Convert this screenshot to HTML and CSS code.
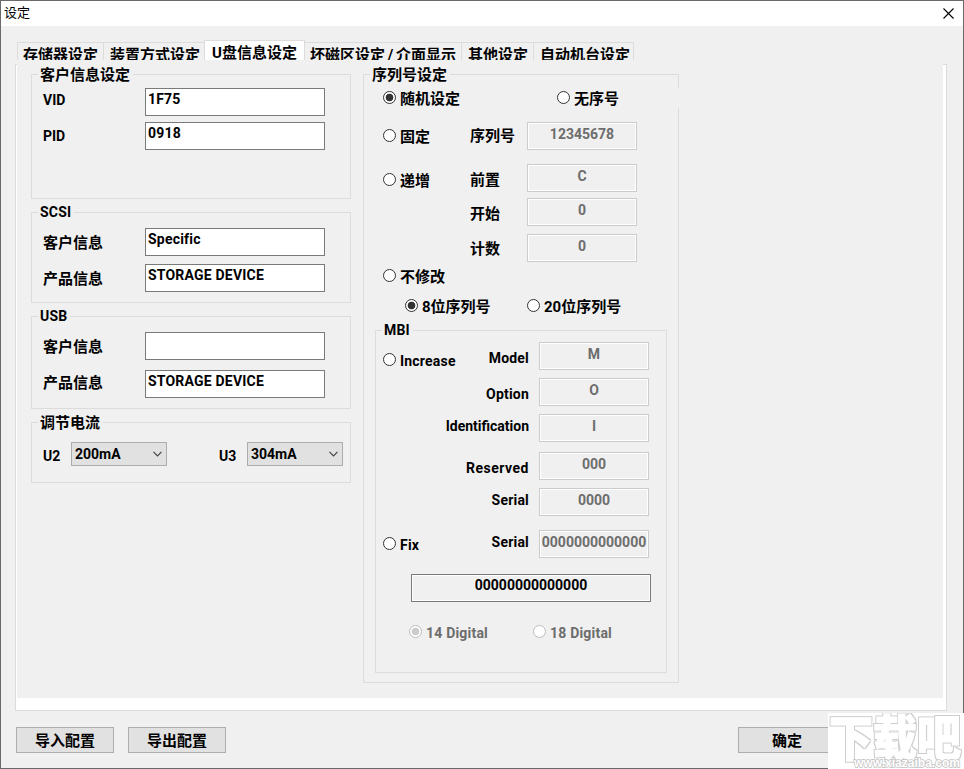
FILE: index.html
```html
<!DOCTYPE html>
<html lang="zh-CN">
<head>
    <meta charset="UTF-8">
    <meta name="viewport" content="width=device-width, initial-scale=1.0">
    <title>设定</title>
    <link rel="stylesheet" href="styles.css">
</head>
<body>
    <div class="window">
        <div class="titlebar">
            <span class="title">设定</span>
            <svg class="close" width="11" height="11" viewBox="0 0 11 11">
                <path d="M0.5 0.5L10.5 10.5M10.5 0.5L0.5 10.5" stroke="#000" stroke-width="1.1" fill="none"/>
            </svg>
        </div>

        <div class="tabs">
            <div class="tab tab-first">存储器设定</div>
            <div class="tab tab-mode">装置方式设定</div>
            <div class="tab tab-usb active">U盘信息设定</div>
            <div class="tab tab-bad">坏磁区设定 / 介面显示</div>
            <div class="tab tab-other">其他设定</div>
            <div class="tab tab-auto">自动机台设定</div>
        </div>

        <div class="panel">
            <div class="page">
                <div class="col-left">
                    <fieldset class="group group-id">
                        <legend>客户信息设定</legend>
                        <div class="row"><label class="raised">VID</label><input class="field" type="text" value="1F75"></div>
                        <div class="row"><label>PID</label><input class="field" type="text" value="0918"></div>
                    </fieldset>
                    <fieldset class="group group-scsi">
                        <legend>SCSI</legend>
                        <div class="row"><label>客户信息</label><input class="field" type="text" value="Specific"></div>
                        <div class="row"><label>产品信息</label><input class="field" type="text" value="STORAGE DEVICE"></div>
                    </fieldset>
                    <fieldset class="group group-usb">
                        <legend>USB</legend>
                        <div class="row"><label>客户信息</label><input class="field" type="text" value=""></div>
                        <div class="row"><label class="raised">产品信息</label><input class="field" type="text" value="STORAGE DEVICE"></div>
                    </fieldset>
                    <fieldset class="group group-current">
                        <legend>调节电流</legend>
                        <div class="current">
                            <label>U2</label>
                            <div class="combo">200mA<svg width="9" height="6" viewBox="0 0 9 6"><path d="M0.5 0.8L4.5 4.8L8.5 0.8" stroke="#444" stroke-width="1.2" fill="none"/></svg></div>
                            <label class="second">U3</label>
                            <div class="combo">304mA<svg width="9" height="6" viewBox="0 0 9 6"><path d="M0.5 0.8L4.5 4.8L8.5 0.8" stroke="#444" stroke-width="1.2" fill="none"/></svg></div>
                        </div>
                    </fieldset>
                </div>

                <fieldset class="group group-serial">
                    <legend>序列号设定</legend>
                    <div class="line line-random">
                        <label class="radio checked"><i></i><span>随机设定</span></label>
                        <label class="radio none"><i></i><span>无序号</span></label>
                    </div>
                    <div class="line line-fixed">
                        <label class="radio"><i></i><span>固定</span></label>
                        <span class="name raised">序列号</span>
                        <input class="field small" type="text" value="12345678" disabled>
                    </div>
                    <div class="line line-inc">
                        <label class="radio"><i></i><span>递增</span></label>
                        <span class="name">前置</span>
                        <input class="field small" type="text" value="C" disabled>
                    </div>
                    <div class="line line-start">
                        <span class="radio"></span>
                        <span class="name">开始</span>
                        <input class="field small" type="text" value="0" disabled>
                    </div>
                    <div class="line line-count">
                        <span class="radio"></span>
                        <span class="name">计数</span>
                        <input class="field small" type="text" value="0" disabled>
                    </div>
                    <div class="line line-keep">
                        <label class="radio"><i></i><span>不修改</span></label>
                    </div>
                    <div class="line line-digits">
                        <label class="radio checked"><i></i><span>8位序列号</span></label>
                        <label class="radio"><i></i><span>20位序列号</span></label>
                    </div>

                    <fieldset class="group group-mbi">
                        <legend>MBI</legend>
                        <div class="mbi mbi-model">
                            <label class="radio"><i></i><span>Increase</span></label>
                            <span class="name">Model</span>
                            <input class="field small" type="text" value="M" disabled>
                        </div>
                        <div class="mbi">
                            <span class="name">Option</span>
                            <input class="field small" type="text" value="O" disabled>
                        </div>
                        <div class="mbi">
                            <span class="name name-long raised">Identification</span>
                            <input class="field small" type="text" value="I" disabled>
                        </div>
                        <div class="mbi mbi-reserved">
                            <span class="name">Reserved</span>
                            <input class="field small" type="text" value="000" disabled>
                        </div>
                        <div class="mbi">
                            <span class="name raised">Serial</span>
                            <input class="field small" type="text" value="0000" disabled>
                        </div>
                        <div class="mbi mbi-fix">
                            <label class="radio"><i></i><span>Fix</span></label>
                            <span class="name raised">Serial</span>
                            <input class="field small" type="text" value="0000000000000" disabled>
                        </div>
                        <input class="field preview" type="text" value="00000000000000" readonly>
                        <div class="digital">
                            <label class="radio checked off"><i></i><span>14 Digital</span></label>
                            <label class="radio off"><i></i><span>18 Digital</span></label>
                        </div>
                    </fieldset>
                </fieldset>
            </div>
        </div>

        <div class="footer">
            <button class="btn">导入配置</button>
            <button class="btn">导出配置</button>
            <button class="btn btn-ok">确定</button>
        </div>
    </div>

    <svg class="watermark" width="136" height="56" viewBox="0 0 136 56">
        <filter id="outline" x="-5%" y="-10%" width="110%" height="120%">
            <feMorphology in="SourceAlpha" operator="dilate" radius="1" result="grown"/>
            <feFlood flood-color="#cdcdcd"/>
            <feComposite in2="grown" operator="in" result="edge"/>
            <feMerge>
                <feMergeNode in="edge"/>
                <feMergeNode in="SourceGraphic"/>
            </feMerge>
        </filter>
        <text class="wm-name" transform="translate(1 43) scale(1 1.12)" textLength="132" lengthAdjust="spacingAndGlyphs">下载吧</text>
        <text class="wm-url" x="26" y="54" textLength="106" lengthAdjust="spacingAndGlyphs">www.xiazaiba.com</text>
    </svg>
</body>
</html>
```
FILE: styles.css
```css
* {
    margin: 0;
    padding: 0;
    box-sizing: border-box;
}

body {
    width: 964px;
    height: 769px;
    overflow: hidden;
    font-family: Roboto, "Noto Sans CJK SC", sans-serif;
    font-size: 14px;
    font-weight: bold;
    color: #000;
}

.window {
    display: flex;
    flex-direction: column;
    height: 769px;
    background: #f0f0f0;
    border: 1px solid #6b6969;
}

.titlebar {
    display: flex;
    justify-content: space-between;
    align-items: center;
    height: 25px;
    padding: 0 9px 1px 3px;
    background: #fff;
}

.title {
    padding-bottom: 2px;
    font-family: "Noto Sans CJK SC", sans-serif;
    font-size: 13px;
    font-weight: normal;
    line-height: 20px;
}

/* tabs */
.tabs {
    display: flex;
    align-items: flex-end;
    height: 34px;
    padding-left: 16px;
}

.tab {
    height: 18px;
    padding-left: 5px;
    border-top: 1px solid #dcdcdc;
    border-right: 1px solid #dcdcdc;
    font-size: 15px;
    line-height: 24px;
    white-space: nowrap;
    overflow: hidden;
}

.tab-first {
    width: 87px;
    border-left: 1px solid #dcdcdc;
}

.tab-mode {
    width: 100px;
    padding-left: 6px;
    border-right: none;
}

.tab-usb {
    width: 101px;
    padding-left: 7px;
    border-left: 1px solid #dcdcdc;
}

.tab-bad {
    width: 157px;
    word-spacing: -1px;
}

.tab-other {
    width: 72px;
    padding-left: 6px;
}

.tab-auto {
    width: 100px;
    padding-left: 6px;
}

.tab.active {
    height: 20px;
    background: #fff;
}

.panel {
    width: 932px;
    height: 647px;
    margin: 4px 0 0 14px;
    padding: 0 3px 12px 1px;
    background: #fff;
    border: 1px solid #dcdcdc;
}

.page {
    display: flex;
    align-items: flex-start;
    gap: 12px;
    height: 634px;
    margin-top: -1px;
    padding: 2px 0 0 14px;
    background: #f0f0f0;
}

/* group boxes */
.group {
    min-width: 0;
    padding: 0 6px;
    border: 1px solid #dcdcdc;
}

.group legend {
    height: 17px;
    padding: 0 3px 0 2px;
    line-height: 19px;
    font-size: 15px;
}

.group-scsi legend,
.group-usb legend,
.group-mbi legend {
    line-height: 17px;
    font-size: 14px;
    letter-spacing: 0.2px;
}

.col-left {
    display: flex;
    flex-direction: column;
    gap: 5px;
    width: 320px;
}

.group-id {
    height: 133px;
}

.group-scsi {
    height: 99px;
}

.group-usb {
    height: 101px;
}

.group-current {
    height: 69px;
}

.row {
    display: flex;
    align-items: center;
    height: 28px;
    margin-top: 8px;
    padding-left: 5px;
}

.row label {
    width: 102px;
    padding-bottom: 2px;
    font-size: 15px;
}

.group-id .row label {
    padding-bottom: 0;
    font-size: 14px;
}

.group-id .row {
    margin-top: 6px;
}

.group-usb .row {
    margin-top: 10px;
}

.group-id legend + .row {
    margin-top: 5px;
}

.group-scsi legend + .row,
.group-usb legend + .row {
    margin-top: 7px;
}

.raised {
    padding-bottom: 4px;
}

.group-id .row .raised {
    padding-bottom: 4px;
}

.group-usb .row .raised {
    padding-bottom: 6px;
}

.field {
    width: 180px;
    height: 28px;
    padding: 0 2px 6px;
    background: #fff;
    border: 1px solid #7a7a7a;
    border-radius: 0;
    font: inherit;
    font-size: 14px;
    letter-spacing: 0.2px;
    color: #000;
    outline: none;
}

.field.small {
    width: 110px;
    padding: 0 0 5px;
    text-align: center;
    letter-spacing: 0;
    background: #f0f0f0;
    border-color: #ccc;
    box-shadow: inset 0 0 0 1px #fff;
    color: #6d6d6d;
}

.field.preview {
    display: block;
    width: 240px;
    margin: 16px 0 0 29px;
    text-align: center;
    letter-spacing: 0;
    background: #f0f0f0;
    box-shadow: inset 0 0 0 1px #fff;
}

.current {
    display: flex;
    align-items: center;
    margin-top: 11px;
    padding-left: 5px;
}

.current label {
    width: 28px;
    padding-top: 3px;
}

.current .second {
    margin-left: 52px;
}

.combo {
    display: flex;
    justify-content: space-between;
    align-items: center;
    width: 96px;
    height: 24px;
    padding: 0 4px 0 3px;
    background: #e1e1e1;
    border: 1px solid #adadad;
}

/* serial number */
.group-serial {
    width: 316px;
    height: 617px;
}

.line {
    display: flex;
    align-items: center;
    height: 28px;
    padding-left: 13px;
}

.line .radio {
    width: 87px;
}

.line .name {
    width: 57px;
    font-size: 15px;
}

.radio {
    display: flex;
    align-items: center;
    gap: 4px;
    font-size: 15px;
    white-space: nowrap;
}

.radio i {
    flex: none;
    width: 13px;
    height: 13px;
    margin-bottom: 1px;
    background: #fff;
    border: 1px solid #333;
    border-radius: 50%;
}

.radio span {
    padding-top: 3px;
    line-height: 17px;
}

.radio.checked i {
    background: radial-gradient(circle, #333 3.5px, #fff 4.2px);
}

.radio.off {
    color: #6d6d6d;
}

.radio.off i {
    border-color: #bcbcbc;
}

.radio.checked.off i {
    background: radial-gradient(circle, #ccc 3.5px, #fff 4.2px);
}

.line-random {
    height: 20px;
    margin-top: 5px;
}

/* the option runs over the group border */
.line-random .none {
    flex: none;
    width: 124px;
    height: 20px;
    margin-left: 87px;
    background: #f0f0f0;
}

.line-random .radio:first-child {
    flex: none;
}

.line-fixed,
.line-inc {
    margin-top: 14px;
}

.line-inc .radio {
    padding-top: 3px;
}

.line-start {
    margin-top: 6px;
}

.line-count {
    margin-top: 8px;
}

.line-count .name {
    padding-bottom: 2px;
}

.line-keep {
    height: 20px;
    margin-top: 4px;
}

.line-digits {
    height: 20px;
    margin-top: 10px;
    padding-left: 35px;
}

.line-digits .radio {
    width: 122px;
}

.group-mbi {
    width: 292px;
    height: 351px;
    margin: 6px 0 0 5px;
}

.mbi {
    display: flex;
    justify-content: flex-end;
    align-items: center;
    height: 28px;
    margin-top: 8px;
    padding: 0 11px 0 1px;
}

.mbi .radio {
    margin-right: auto;
    font-size: 14px;
    letter-spacing: 0.2px;
}

.mbi-model .radio {
    padding-top: 8px;
}

.mbi .name {
    margin-right: 10px;
    padding-top: 4px;
    letter-spacing: 0.2px;
}

.mbi .name-long {
    letter-spacing: 0;
}

.mbi .name.raised {
    padding: 0 0 4px;
}

.mbi-model {
    margin-top: 3px;
}

.mbi-reserved {
    margin-top: 10px;
}

.mbi-reserved .name {
    letter-spacing: 0.5px;
}

.mbi-fix {
    margin-top: 14px;
}

.digital {
    display: flex;
    height: 20px;
    margin-top: 20px;
    padding-left: 27px;
}

.digital .radio {
    width: 124px;
    font-size: 14px;
    letter-spacing: 0.2px;
}

/* bottom buttons */
.footer {
    display: flex;
    gap: 14px;
    padding: 16px 127px 0 15px;
}

.btn {
    width: 98px;
    height: 26px;
    padding-bottom: 2px;
    background: #e1e1e1;
    border: 1px solid #adadad;
    font: inherit;
    font-size: 15px;
    color: #000;
}

.btn-ok {
    margin-left: auto;
}

.watermark {
    position: absolute;
    left: 828px;
    top: 713px;
    background: #fff;
}

.wm-name {
    font-family: "Noto Sans CJK SC", sans-serif;
    font-size: 44px;
    font-weight: 900;
    fill: #fff;
    stroke: #fff;
    stroke-width: 1px;
    filter: url(#outline);
}

.wm-url {
    font-family: "Liberation Sans", sans-serif;
    font-size: 13px;
    font-weight: bold;
    fill: #fff;
    stroke: #c4c4c4;
    stroke-width: 1.6px;
    paint-order: stroke;
}
```
